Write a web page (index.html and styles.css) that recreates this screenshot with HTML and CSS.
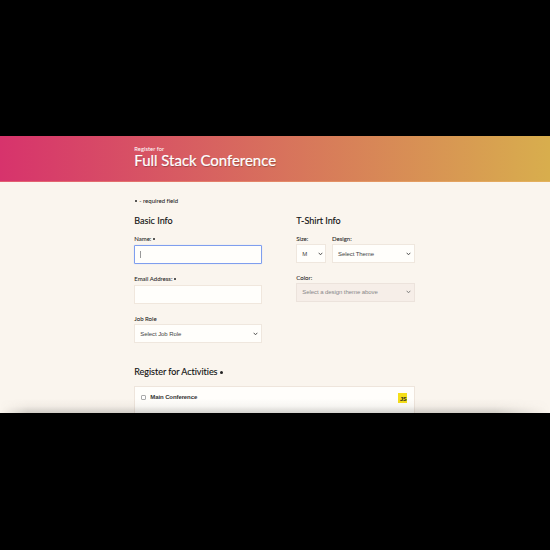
FILE: index.html
```html
<!DOCTYPE html>
<html lang="en">
<head>
<meta charset="utf-8">
<title>Full Stack Conference</title>
<link rel="stylesheet" href="styles.css">
</head>
<body>
<div class="screen">
  <header class="banner">
    <div class="container">
      <p class="kicker">Register for</p>
      <h1 class="title">Full Stack Conference</h1>
    </div>
  </header>
  <main class="container">
    <p class="note"><i class="dot"></i>- required field</p>
    <div class="columns">
      <section class="basic">
        <h2 class="heading">Basic Info</h2>
        <div class="label">Name: <i class="dot"></i></div>
        <div class="input focused"><span class="caret"></span></div>
        <div class="label">Email Address: <i class="dot"></i></div>
        <div class="input"></div>
        <div class="label">Job Role</div>
        <div class="select"><span>Select Job Role</span><svg class="chevron" viewBox="0 0 5 4"><path d="M.7 .8 2.5 2.8 4.3 .8"/></svg></div>
      </section>
      <section class="shirt">
        <h2 class="heading">T-Shirt Info</h2>
        <div class="pair">
          <div class="size">
            <div class="label">Size:</div>
            <div class="select"><span>M</span><svg class="chevron" viewBox="0 0 5 4"><path d="M.7 .8 2.5 2.8 4.3 .8"/></svg></div>
          </div>
          <div class="design">
            <div class="label">Design:</div>
            <div class="select"><span>Select Theme</span><svg class="chevron" viewBox="0 0 5 4"><path d="M.7 .8 2.5 2.8 4.3 .8"/></svg></div>
          </div>
        </div>
        <div class="label">Color:</div>
        <div class="select disabled"><span>Select a design theme above</span><svg class="chevron" viewBox="0 0 5 4"><path d="M.7 .8 2.5 2.8 4.3 .8"/></svg></div>
      </section>
    </div>
    <h2 class="heading activities-heading">Register for Activities <i class="dot"></i></h2>
    <div class="activities">
      <span class="checkbox"></span>
      <span class="activity">Main Conference</span>
      <span class="js">JS</span>
    </div>
  </main>
  <div class="shade"></div>
</div>
</body>
</html>
```
FILE: styles.css
```css
* { box-sizing: border-box; }
body {
  margin: 0;
  height: 550px;
  padding-top: 136px;
  overflow: hidden;
  background: #000;
  color: #222;
  font-family: Lato, sans-serif;
  font-variant-ligatures: none;
}
h1, h2, p { margin: 0; font-weight: 400; }
.screen {
  position: relative;
  height: 276.7px;
  overflow: hidden;
  background: #faf5ee;
}
.container { width: 280.5px; margin-left: 134.3px; }
.banner {
  height: 45.6px;
  padding-top: 9px;
  background: linear-gradient(90deg, #d7336c, #d8ae4d);
  border-bottom: 1px solid rgba(255, 190, 130, .3);
  color: #fff;
}
.kicker { font-size: 5.8px; line-height: 8px; letter-spacing: .05px; }
.title {
  margin-top: -1px;
  font-size: 15px;
  line-height: 16px;
  letter-spacing: -.03px;
  white-space: nowrap;
  -webkit-text-stroke: .2px #fff;
  text-shadow: .5px .5px 1px rgba(0, 0, 0, .3);
}
.note {
  display: flex;
  align-items: center;
  gap: 2px;
  margin-top: 15.4px;
  padding-left: 1px;
  font-size: 6px;
  line-height: 8px;
}
.note, .label { -webkit-text-stroke: .05px #222; }
.dot {
  display: inline-block;
  width: 2px;
  height: 2px;
  border-radius: 50%;
  background: #222;
  vertical-align: 1px;
}
.columns { display: flex; gap: 34.6px; height: 151.5px; margin-top: 10px; }
.basic { width: 127.4px; }
.shirt { width: 118.5px; }
.heading {
  height: 12px;
  font-size: 9px;
  line-height: 12px;
  color: #111;
  white-space: nowrap;
  -webkit-text-stroke: .12px #111;
}
.label { height: 8px; font-size: 6px; line-height: 8px; white-space: nowrap; }
.heading + .label, .pair { margin-top: 8px; }
.input {
  height: 19px;
  margin: 2.4px 0 10.7px;
  padding: 5px 5px;
  background: #fffefb;
  border: 1px solid #f0e7dd;
}
.focused { border-color: #7f9eee; border-radius: 1px; box-shadow: 0 0 1px #a9c0ff; }
.caret { display: block; width: 1px; height: 7px; background: #999; }
.select {
  display: flex;
  align-items: center;
  justify-content: space-between;
  height: 18.6px;
  margin-top: 1.3px;
  padding: 0 2.4px 0 5px;
  background: #fffefb;
  border: 1px solid #efe7de;
  font-family: "Liberation Sans", sans-serif;
  font-size: 6px;
  letter-spacing: -.07px;
  color: #444;
  white-space: nowrap;
}
.chevron { width: 5px; height: 4px; fill: none; stroke: #444; stroke-width: .9; }
.pair { display: flex; gap: 5.7px; margin-bottom: 10.9px; }
.size { width: 30px; }
.design { flex: 1; }
.disabled { background: #f6eee8; color: #888; border-color: #ece3dc; }
.disabled .chevron { stroke: #777; }
.activities-heading { letter-spacing: -.03px; }
.activities-heading .dot { width: 3px; height: 3px; }
.activities {
  display: flex;
  align-items: flex-start;
  height: 40px;
  margin-top: 8px;
  padding: 6px 6px 0;
  background: #fffefb;
  border: 1px solid #eee5dc;
}
.checkbox { width: 5px; height: 5px; margin-top: 2px; background: #fff; border: 1px solid #aaa; border-radius: 1px; }
.activity { margin-left: 4px; font: bold 6px/9px "Liberation Sans", sans-serif; letter-spacing: -.1px; color: #333; }
.js {
  width: 9.5px;
  height: 9.5px;
  margin-left: auto;
  margin-right: .5px;
  padding: 3px .5px 0 0;
  background: #f5df19;
  color: #222;
  font: bold 5.5px/7px "Liberation Sans", sans-serif;
  text-align: right;
}
.shade {
  position: absolute;
  left: 0;
  right: 0;
  bottom: 0;
  height: 14px;
  background: linear-gradient(transparent, rgba(80, 75, 70, .05) 50%, rgba(80, 75, 70, .24));
  -webkit-mask-image: linear-gradient(90deg, transparent, #000 5%, #000 90%, transparent);
  mask-image: linear-gradient(90deg, transparent, #000 5%, #000 90%, transparent);
}
```
